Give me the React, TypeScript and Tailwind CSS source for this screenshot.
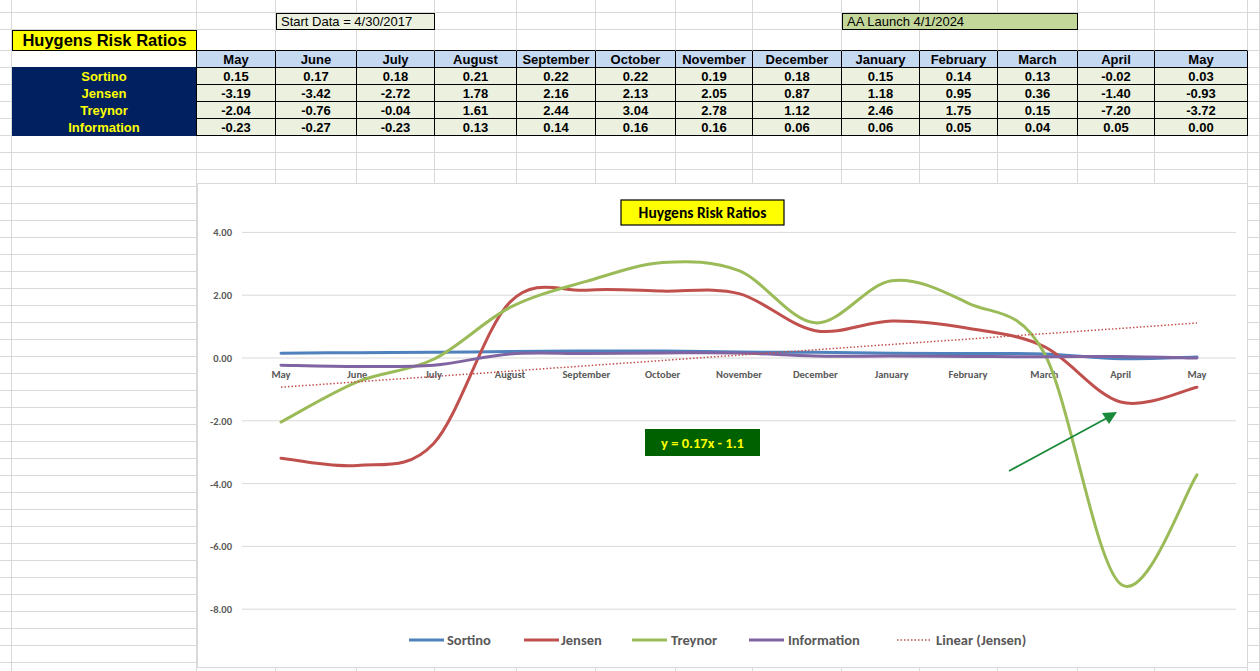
import React from "react";

const months = ["May","June","July","August","September","October","November","December","January","February","March","April","May"];
const rowsData: [string, string[]][] = [
  ["Sortino", ["0.15","0.17","0.18","0.21","0.22","0.22","0.19","0.18","0.15","0.14","0.13","-0.02","0.03"]],
  ["Jensen", ["-3.19","-3.42","-2.72","1.78","2.16","2.13","2.05","0.87","1.18","0.95","0.36","-1.40","-0.93"]],
  ["Treynor", ["-2.04","-0.76","-0.04","1.61","2.44","3.04","2.78","1.12","2.46","1.75","0.15","-7.20","-3.72"]],
  ["Information", ["-0.23","-0.27","-0.23","0.13","0.14","0.16","0.16","0.06","0.06","0.05","0.04","0.05","0.00"]],
];

const FONT = { fontFamily: '"Liberation Sans", Arial, sans-serif' };
const G = "border-r border-b border-[#d9d9d9]";

function px(i: number) { return 280 + i * 76.33; }
function py(v: number) { return 357 - v * 31.4; }

function smooth(vals: number[]) {
  const p = vals.map((v, i) => [px(i), py(v)]);
  let d = `M${p[0][0]},${p[0][1]}`;
  for (let i = 0; i < p.length - 1; i++) {
    const p0 = p[i - 1] || p[i], p1 = p[i], p2 = p[i + 1], p3 = p[i + 2] || p[i + 1];
    const c1 = [p1[0] + (p2[0] - p0[0]) / 6, p1[1] + (p2[1] - p0[1]) / 6];
    const c2 = [p2[0] - (p3[0] - p1[0]) / 6, p2[1] - (p3[1] - p1[1]) / 6];
    d += ` C${c1[0]},${c1[1]} ${c2[0]},${c2[1]} ${p2[0]},${p2[1]}`;
  }
  return d;
}

function Chart() {
  const series: [string, number][] = [];
  const colors = ["#4f81bd", "#c0504d", "#9bbb59", "#8064a2"];
  const lf = 'Carlito, "Open Sans", sans-serif';
  return (
    <div className="absolute left-[197px] top-[183px] w-[1051px] h-[485px] bg-white border border-[#d9d9d9]">
      <svg width="1051" height="485" viewBox="197 183 1051 485">
        {[4, 2, 0, -2, -4, -6, -8].map((v) => (
          <g key={v}>
            <line x1="241" x2="1235" y1={py(v)} y2={py(v)} stroke="#d9d9d9" strokeWidth="1" />
            <text x="231" y={py(v) + 4} textAnchor="end" fontSize="10.5" fontWeight="bold" fill="#595959" fontFamily={lf}>{v.toFixed(2)}</text>
          </g>
        ))}
        {months.map((m, i) => (
          <text key={i} x={px(i)} y="377" textAnchor="middle" fontSize="10.5" fontWeight="bold" fill="#595959" fontFamily={lf}>{m}</text>
        ))}
        {rowsData.map(([n, vals], k) => (
          <path key={n} d={smooth(vals.map(Number))} fill="none" stroke={colors[k]} strokeWidth="3" strokeLinecap="round" />
        ))}
        <line x1={px(0)} y1={py(-1.1 + 0.1703)} x2={px(12)} y2={py(-1.1 + 0.1703 * 13)} stroke="#c0504d" strokeWidth="1.5" strokeDasharray="1.5 2" />
        <rect x="620" y="199" width="163" height="25" fill="#ffff00" stroke="#000" strokeWidth="1.2" />
        <text x="701.5" y="217" textAnchor="middle" fontSize="15.5" fontWeight="bold" fill="#000" fontFamily={lf}>Huygens Risk Ratios</text>
        <rect x="644" y="428" width="115" height="27" fill="#006100" />
        <text x="701.5" y="447" textAnchor="middle" fontSize="14.5" fontWeight="bold" fill="#ffff00" fontFamily={lf}>y = 0.17x - 1.1</text>
        <line x1="1008" y1="470" x2="1106" y2="417" stroke="#1a8a3a" strokeWidth="1.8" />
        <polygon points="1116,411 1101,412 1108,423" fill="#1a8a3a" />
        {[
          ["Sortino", 408, 446, colors[0]],
          ["Jensen", 523, 560, colors[1]],
          ["Treynor", 631, 670, colors[2]],
          ["Information", 748, 787, colors[3]],
        ].map(([n, lx, tx, c]) => (
          <g key={n as string}>
            <line x1={lx as number} x2={(lx as number) + 35} y1="639" y2="639" stroke={c as string} strokeWidth="3" />
            <text x={tx as number} y="644" fontSize="14.5" fontWeight="600" fill="#595959" fontFamily={lf}>{n}</text>
          </g>
        ))}
        <line x1="896" x2="930" y1="639" y2="639" stroke="#c0504d" strokeWidth="1.5" strokeDasharray="1.5 2" />
        <text x="935" y="644" fontSize="14.5" fontWeight="600" fill="#595959" fontFamily={lf}>Linear (Jensen)</text>
      </svg>
    </div>
  );
}

export default function App() {
  const cols = 16;
  const extraRows = 32;
  const cells: React.ReactNode[] = [];
  const empty = (key: string, cls = G) => cells.push(<div key={key} className={cls} />);

  // row 0
  for (let c = 0; c < cols; c++) empty(`0-${c}`);
  // row 1
  for (let c = 0; c < cols; c++) {
    if (c === 3) {
      cells.push(<div key="sd" className="col-span-2 border border-black bg-[#ebf1de] text-[13px] leading-none flex items-center pl-1">Start Data = 4/30/2017</div>);
      c = 4; continue;
    }
    if (c === 10) {
      cells.push(<div key="aa" className="col-span-3 border border-black bg-[#c4d79b] text-[13px] leading-none flex items-center pl-1">AA Launch 4/1/2024</div>);
      c = 12; continue;
    }
    empty(`1-${c}`);
  }
  // row 2
  for (let c = 0; c < cols; c++) {
    if (c === 1) {
      cells.push(<div key="title" className="border border-black bg-[#ffff00] text-[16.5px] font-bold flex items-center justify-center">Huygens Risk Ratios</div>);
    } else if (c >= 2 && c <= 14) {
      empty(`2-${c}`, "border-r border-b border-[#d9d9d9] border-b-black");
    } else empty(`2-${c}`);
  }
  // row 3 headers
  for (let c = 0; c < cols; c++) {
    if (c === 1) empty("3-1", "border-r border-b border-r-black border-b-[#002060] bg-white");
    else if (c >= 2 && c <= 14)
      cells.push(<div key={`3-${c}`} className="border-r border-b border-black bg-[#c5d9f1] text-[13px] font-bold flex items-center justify-center leading-none">{months[c - 2]}</div>);
    else empty(`3-${c}`);
  }
  // data rows
  rowsData.forEach(([name, vals], r) => {
    for (let c = 0; c < cols; c++) {
      if (c === 1)
        cells.push(<div key={`d${r}-1`} className="border-r border-r-black bg-[#002060] text-[#ffff00] text-[13px] font-bold flex items-center justify-center leading-none">{name}</div>);
      else if (c >= 2 && c <= 14)
        cells.push(<div key={`d${r}-${c}`} className="border-r border-b border-black bg-[#ebf1de] text-[13px] font-bold flex items-center justify-center leading-none">{vals[c - 2]}</div>);
      else empty(`d${r}-${c}`);
    }
  });
  for (let r = 0; r < extraRows; r++) for (let c = 0; c < cols; c++) empty(`e${r}-${c}`);

  return (
    <div className="relative w-[1260px] h-[671px] overflow-hidden bg-white text-black" style={FONT}>
      <div className="grid grid-cols-[12px_185px_79px_81px_78px_82px_79px_80px_77px_89px_78px_78px_80px_77px_93px_1fr] grid-rows-[13px_17px_21px_17px_17px_17px_17px_17px]" style={{ gridAutoRows: "17px" }}>
        {cells}
      </div>
      <Chart />
    </div>
  );
}
